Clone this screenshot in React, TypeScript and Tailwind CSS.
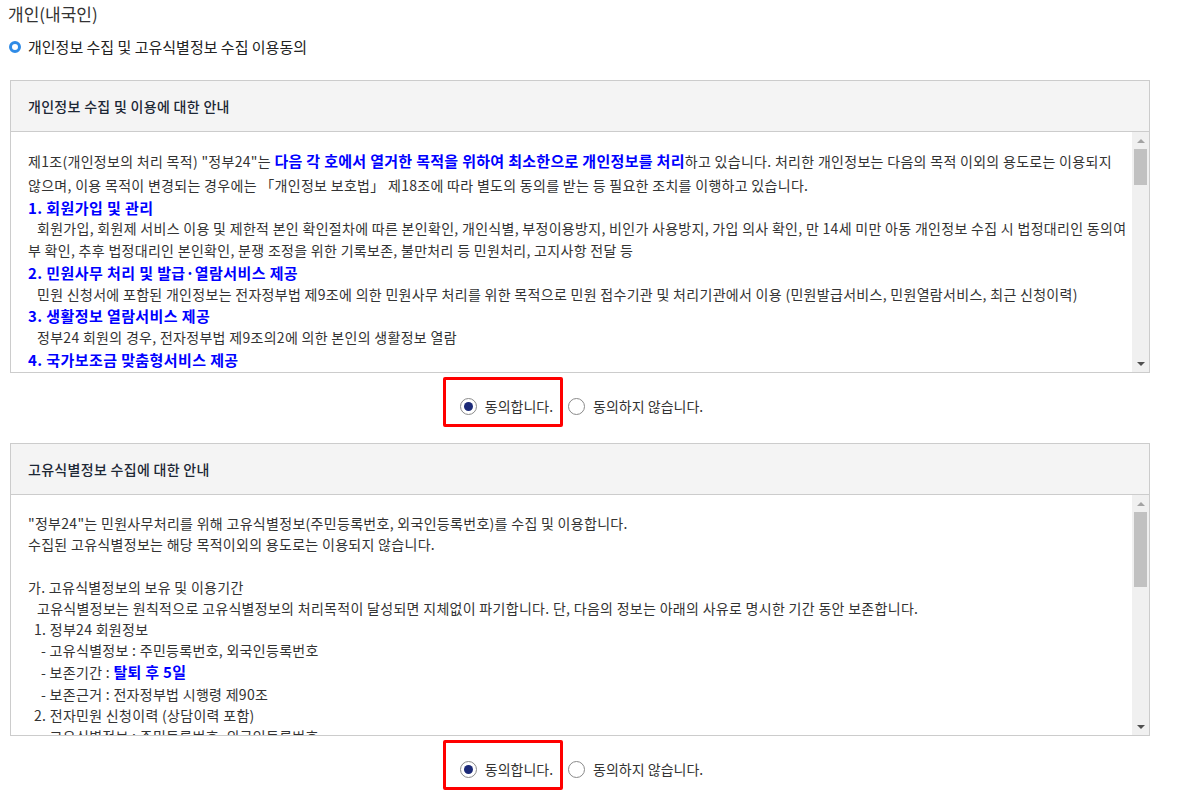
import React from "react";

const font = { fontFamily: '"Noto Sans CJK KR", "Noto Sans", sans-serif' };

function Scrollbar({ thumb }: { thumb: string }) {
  return (
    <div className="w-[17px] shrink-0 bg-[#f0f0f0] flex flex-col items-center">
      <div className="h-[17px] w-full flex items-center justify-center">
        <div className="w-0 h-0 border-l-[4px] border-r-[4px] border-b-[4px] border-l-transparent border-r-transparent border-b-[#a3a3a3]" />
      </div>
      <div className={`w-[13px] bg-[#c1c1c1] ${thumb}`} />
      <div className="flex-1" />
      <div className="h-[17px] w-full flex items-center justify-center">
        <div className="w-0 h-0 border-l-[4px] border-r-[4px] border-t-[4px] border-l-transparent border-r-transparent border-t-[#505050]" />
      </div>
    </div>
  );
}

function Radio({ checked }: { checked?: boolean }) {
  return (
    <span className="w-[17px] h-[17px] rounded-full border border-[#8a8a8a] bg-white flex items-center justify-center shrink-0">
      {checked && <span className="w-[9px] h-[9px] rounded-full bg-[#1c2a78]" />}
    </span>
  );
}

function Agree() {
  return (
    <div className="ml-[10px] w-[1140px] mt-[4px] flex justify-center pr-[14px]">
      <div className="flex items-center gap-[8px] border-[3px] border-[#ff0000] rounded-[2px] h-[50px] pt-[8px] pl-[14px] pr-[7px]">
        <Radio checked />
        <span className="text-[14px] text-[#333]">동의합니다.</span>
      </div>
      <div className="flex items-center gap-[8px] ml-[5px] h-[50px] pt-[8px]">
        <Radio />
        <span className="text-[14px] text-[#333]">동의하지 않습니다.</span>
      </div>
    </div>
  );
}

function Box({
  title,
  thumb,
  leading,
  children,
}: {
  title: string;
  thumb: string;
  leading: string;
  children: React.ReactNode;
}) {
  return (
    <section className="ml-[10px] w-[1140px] border border-[#cccccc] bg-white">
      <div className="h-[51px] bg-[#f4f4f4] border-b border-[#cccccc] flex items-center px-[17px] text-[14px] tracking-[0.3px] font-medium text-[#1c2735]">
        {title}
      </div>
      <div className="h-[240px] flex">
        <div
          className={`flex-1 overflow-hidden pl-[17px] pt-[18px] text-[14px] tracking-[0.3px] text-[#333] whitespace-nowrap ${leading}`}
        >
          {children}
        </div>
        <Scrollbar thumb={thumb} />
      </div>
    </section>
  );
}

const H = ({ children }: { children: React.ReactNode }) => (
  <div className="text-[15px] tracking-[0.4px] font-bold text-[#0000ff]">{children}</div>
);

const Blue = ({ children }: { children: React.ReactNode }) => (
  <b className="text-[15px] tracking-[0.3px] text-[#0000ff]">{children}</b>
);

export default function App() {
  return (
    <div className="w-[1183px] h-[791px] bg-white overflow-hidden" style={font}>
      <div className="pl-[8px] pt-[2px] h-[30px] text-[17px] text-[#333] leading-[24px]">개인(내국인)</div>
      <div className="flex items-center pl-[9px] h-[34px]">
        <span className="w-[12px] h-[12px] rounded-full border-[3px] border-[#2f8be6]" />
        <span className="ml-[7px] text-[15px] text-[#222]">개인정보 수집 및 고유식별정보 수집 이용동의</span>
      </div>
      <div className="h-[16px]" />

      <Box title="개인정보 수집 및 이용에 대한 안내" thumb="h-[36px]" leading="leading-[21.7px]">
        <div>
          제1조(개인정보의 처리 목적) "정부24"는{" "}
          <Blue>다음 각 호에서 열거한 목적을 위하여 최소한으로 개인정보를 처리</Blue>
          하고 있습니다. 처리한 개인정보는 다음의 목적 이외의 용도로는 이용되지
        </div>
        <div className="leading-[24px]">
          않으며, 이용 목적이 변경되는 경우에는 「개인정보 보호법」 제18조에 따라 별도의 동의를 받는 등 필요한 조치를 이행하고 있습니다.
        </div>
        <H>1. 회원가입 및 관리</H>
        <div className="pl-[9px]">
          회원가입, 회원제 서비스 이용 및 제한적 본인 확인절차에 따른 본인확인, 개인식별, 부정이용방지, 비인가 사용방지, 가입 의사 확인, 만 14세 미만 아동 개인정보 수집 시 법정대리인 동의여
        </div>
        <div>부 확인, 추후 법정대리인 본인확인, 분쟁 조정을 위한 기록보존, 불만처리 등 민원처리, 고지사항 전달 등</div>
        <H>2. 민원사무 처리 및 발급·열람서비스 제공</H>
        <div className="pl-[9px]">
          민원 신청서에 포함된 개인정보는 전자정부법 제9조에 의한 민원사무 처리를 위한 목적으로 민원 접수기관 및 처리기관에서 이용 (민원발급서비스, 민원열람서비스, 최근 신청이력)
        </div>
        <H>3. 생활정보 열람서비스 제공</H>
        <div className="pl-[9px]">정부24 회원의 경우, 전자정부법 제9조의2에 의한 본인의 생활정보 열람</div>
        <H>4. 국가보조금 맞춤형서비스 제공</H>
      </Box>

      <Agree />
      <div className="h-[16px]" />

      <Box title="고유식별정보 수집에 대한 안내" thumb="h-[75px]" leading="leading-[21.2px]">
        <div>"정부24"는 민원사무처리를 위해 고유식별정보(주민등록번호, 외국인등록번호)를 수집 및 이용합니다.</div>
        <div>수집된 고유식별정보는 해당 목적이외의 용도로는 이용되지 않습니다.</div>
        <div>&nbsp;</div>
        <div>가. 고유식별정보의 보유 및 이용기간</div>
        <div className="pl-[9px]">
          고유식별정보는 원칙적으로 고유식별정보의 처리목적이 달성되면 지체없이 파기합니다. 단, 다음의 정보는 아래의 사유로 명시한 기간 동안 보존합니다.
        </div>
        <div className="pl-[6px]">1. 정부24 회원정보</div>
        <div className="pl-[13px]">- 고유식별정보 : 주민등록번호, 외국인등록번호</div>
        <div className="pl-[13px]">
          - 보존기간 : <Blue>탈퇴 후 5일</Blue>
        </div>
        <div className="pl-[13px]">- 보존근거 : 전자정부법 시행령 제90조</div>
        <div className="pl-[6px]">2. 전자민원 신청이력 (상담이력 포함)</div>
        <div className="pl-[13px]">- 고유식별정보 : 주민등록번호, 외국인등록번호</div>
      </Box>

      <Agree />
    </div>
  );
}
